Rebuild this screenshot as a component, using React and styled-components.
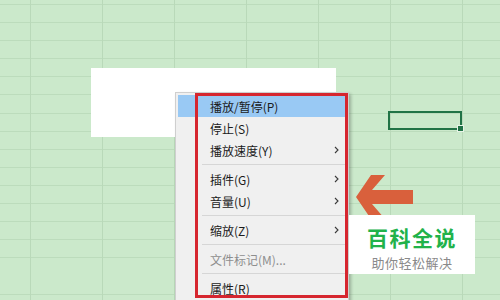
import React from 'react';
import styled, { createGlobalStyle } from 'styled-components';

const GlobalStyle = createGlobalStyle`
  html, body {
    margin: 0;
    padding: 0;
    background: #cbe9cb;
  }
  body {
    font-family: "Noto Sans CJK SC", "Noto Sans", sans-serif;
  }
`;

const Sheet = styled.div`
  position: relative;
  width: 500px;
  height: 300px;
  overflow: hidden;
  background-color: #cbe9cb;
  background-image:
    repeating-linear-gradient(to right, transparent 0 30px, #b9d9b9 30px 31px, transparent 31px 72px),
    repeating-linear-gradient(to bottom, transparent 0 4px, #bcdcbc 4px 5px, transparent 5px 18.1px);
`;

const WhitePanel = styled.div`
  position: absolute;
  left: 91px;
  top: 68px;
  width: 245px;
  height: 69px;
  background: #ffffff;
`;

const SelectedCell = styled.div`
  position: absolute;
  left: 388px;
  top: 111px;
  width: 74px;
  height: 19px;
  box-sizing: border-box;
  border: 2px solid #217346;

  &::after {
    content: '';
    position: absolute;
    right: -4px;
    bottom: -4px;
    width: 5px;
    height: 5px;
    background: #217346;
    border: 1px solid #e8f4e8;
  }
`;

const Menu = styled.div`
  position: absolute;
  left: 175px;
  top: 92px;
  width: 174px;
  height: 230px;
  box-sizing: border-box;
  padding: 2px;
  background: #f0f0f0;
  border: 1px solid #cfcfcf;
  box-shadow: 2px 2px 3px rgba(0, 0, 0, 0.25);
  display: flex;
  flex-direction: column;
`;

const Item = styled.div`
  height: 22px;
  flex: none;
  display: flex;
  align-items: center;
  justify-content: space-between;
  padding: 0 7px 0 32px;
  font-size: 12px;
  color: ${p => (p.$disabled ? '#8e8e8e' : '#1b1b1b')};
  background: ${p => (p.$active ? '#99c9f4' : 'transparent')};
`;

const Separator = styled.div`
  height: 7px;
  flex: none;
  display: flex;
  align-items: center;
  padding-left: 24px;

  &::before {
    content: '';
    flex: 1;
    height: 1px;
    background: #d6d6d6;
  }
`;

const Annotation = styled.div`
  position: absolute;
  left: 195px;
  top: 93px;
  width: 153px;
  height: 205px;
  box-sizing: border-box;
  border: 3px solid #d6262f;
  pointer-events: none;
`;

const Pointer = styled.svg`
  position: absolute;
  left: 354px;
  top: 173px;
`;

const Badge = styled.div`
  position: absolute;
  left: 349px;
  top: 215px;
  width: 126px;
  height: 59px;
  box-sizing: border-box;
  padding-top: 4px;
  background: #ffffff;
  display: flex;
  flex-direction: column;
  align-items: center;
  justify-content: center;
  overflow: hidden;
`;

const BadgeTitle = styled.div`
  font-size: 21px;
  font-weight: 700;
  line-height: 31px;
  letter-spacing: 1.5px;
  color: #21b24a;
`;

const BadgeSub = styled.div`
  font-size: 13px;
  line-height: 19px;
  letter-spacing: 0.5px;
  color: #8a8a8a;
`;

const Chevron = () => (
  <svg width="5" height="8" viewBox="0 0 5 8">
    <path d="M1 1 L4 4 L1 7" fill="none" stroke="#3a3a3a" strokeWidth="1.1" />
  </svg>
);

const entries = [
  { label: '播放/暂停(P)', active: true },
  { label: '停止(S)' },
  { label: '播放速度(Y)', sub: true },
  'sep',
  { label: '插件(G)', sub: true },
  { label: '音量(U)', sub: true },
  'sep',
  { label: '缩放(Z)', sub: true },
  'sep',
  { label: '文件标记(M)...', disabled: true },
  'sep',
  { label: '属性(R)' },
];

export default function App() {
  return (
    <>
      <GlobalStyle />
      <Sheet>
        <WhitePanel />
        <SelectedCell />
        <Menu>
          {entries.map((e, i) =>
            e === 'sep' ? (
              <Separator key={i} />
            ) : (
              <Item key={i} $active={e.active} $disabled={e.disabled}>
                <span>{e.label}</span>
                {e.sub && <Chevron />}
              </Item>
            )
          )}
        </Menu>
        <Annotation />
        <Pointer width="62" height="48" viewBox="0 0 62 48">
          <polygon
            points="2,24 17,2 31,2 18,17 59,17 59,31 18,31 31,46 17,46"
            fill="#d9603c"
          />
        </Pointer>
        <Badge>
          <BadgeTitle>百科全说</BadgeTitle>
          <BadgeSub>助你轻松解决</BadgeSub>
        </Badge>
      </Sheet>
    </>
  );
}
